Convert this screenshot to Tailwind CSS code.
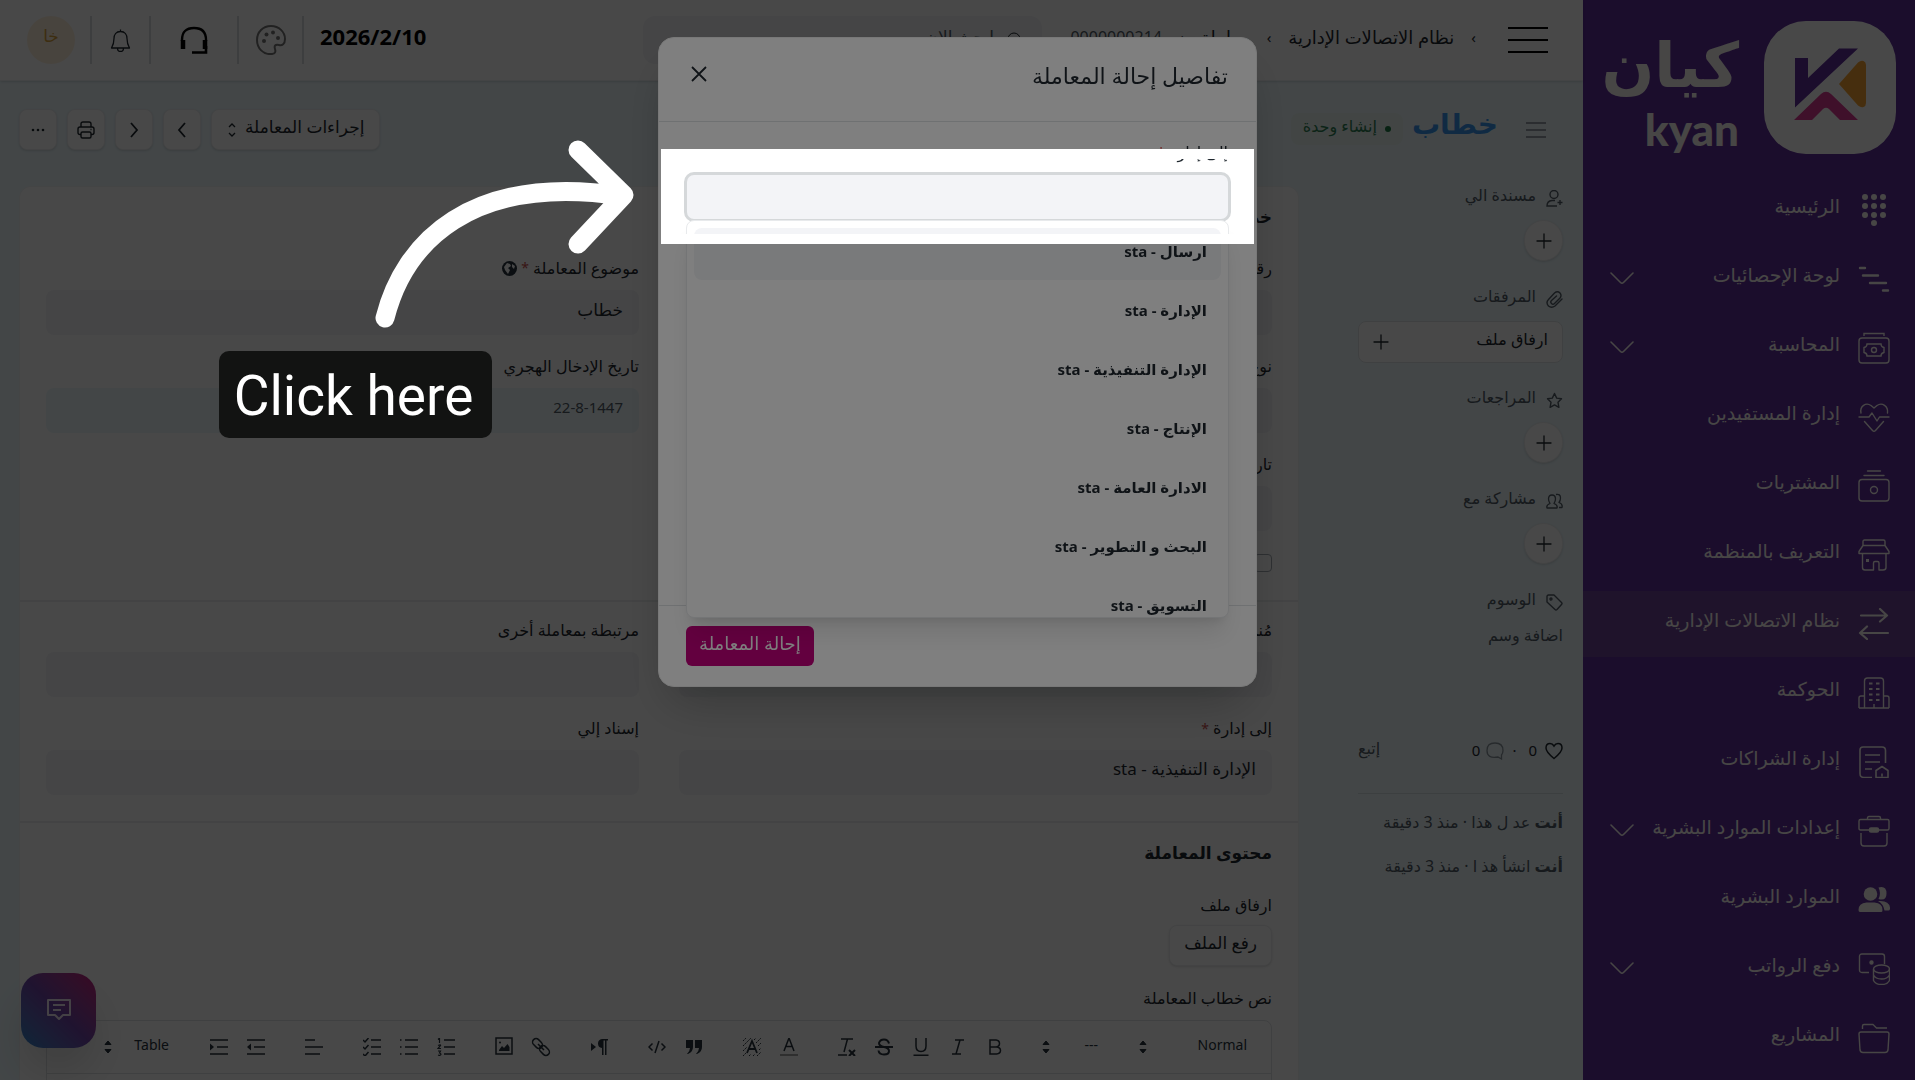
<!DOCTYPE html>
<html lang="ar" dir="rtl">
<head>
  <meta charset="UTF-8">
  <meta name="viewport" content="width=device-width, initial-scale=1.0">
  <title>كيان - خطاب</title>
  <script src="https://cdn.jsdelivr.net/npm/@tailwindcss/browser@4"></script>
</head>
<body class="h-screen overflow-hidden bg-[#ecf8fc] font-['Noto_Sans','DejaVu_Sans',sans-serif] text-[#1f272e]">

  <!-- icons used more than once -->
  <svg class="hidden">
    <symbol id="down" viewBox="0 0 24 14"><path d="M1 1l9.5 9.5q1.5 1.3 3 0L23 1" fill="none" stroke="currentColor" stroke-width="1.6" stroke-linecap="round"/></symbol>
    <symbol id="plus" viewBox="0 0 16 16"><path d="M8 1v14M1 8h14" fill="none" stroke="currentColor" stroke-width="1.3" stroke-linecap="round"/></symbol>
    <symbol id="sort" viewBox="0 0 10 16"><path d="M2 5.500L5 2l3 3.500zM2 10.500L5 14l3-3.500z" fill="currentColor" stroke="currentColor" stroke-linejoin="round"/></symbol>
  </svg>

  <div class="flex h-full">

    <!-- sidebar -->
    <aside class="flex w-[332px] shrink-0 flex-col overflow-hidden bg-[#602e9c] text-[#fbf7f4]">
      <div class="flex h-[177px] shrink-0 items-start pt-[21px] pr-[19px]">
        <svg class="h-[133px] w-[132px] shrink-0" viewBox="0 0 132 133">
          <rect width="132" height="133" rx="42" fill="#fff"/>
          <path d="M31 37h13v20l31-29.500h19L31 86.500z" fill="#602e9c"/>
          <path d="M75 63l19-21.500q3-2.500 5.500-1.500 2.500 1 2.500 4v38q0 3-2.500 4t-5.500-1.500z" fill="#f8a433"/>
          <path d="M30 99l27-26q5-4.500 10 0l27 26H76L65 88q-3-2.500-6 0L48 99z" fill="#dd3a94"/>
        </svg>
        <div class="mr-[25px] flex flex-col items-start font-bold">
          <span class="h-[90px] text-[62px] leading-[84px] whitespace-nowrap">كيان</span>
          <span class="font-[Lato] text-[44px] leading-9 font-black" dir="ltr">kyan</span>
        </div>
      </div>
      <nav class="flex flex-col gap-[3px] text-[19px] whitespace-nowrap">
        <a href="#" class="flex h-[66px] shrink-0 items-center gap-[18px] pr-[25px] pl-[27px]">
          <svg class="size-8 shrink-0" viewBox="0 0 32 32" fill="currentColor"><circle cx="7" cy="3" r="3"/><circle cx="16" cy="3" r="3"/><circle cx="25" cy="3" r="3"/><circle cx="7" cy="12" r="3"/><circle cx="16" cy="12" r="3"/><circle cx="25" cy="12" r="3"/><circle cx="7" cy="21" r="3"/><circle cx="16" cy="21" r="3"/><circle cx="25" cy="21" r="3"/><circle cx="16" cy="29" r="3"/></svg>
          <span class="pb-2">الرئيسية</span>
        </a>
        <a href="#" class="flex h-[66px] shrink-0 items-center gap-[18px] pr-[25px] pl-[27px]">
          <svg class="size-8 shrink-0" viewBox="0 0 32 32" fill="none" stroke="currentColor" stroke-width="2.400" stroke-linecap="round"><path d="M2 5h5M5 12.500h15M12 20h16M25 27.500h5"/></svg>
          <span class="pb-2">لوحة الإحصائيات</span>
          <svg class="mr-auto h-3.5 w-6 shrink-0"><use href="#down"/></svg>
        </a>
        <a href="#" class="flex h-[66px] shrink-0 items-center gap-[18px] pr-[25px] pl-[27px]">
          <svg class="size-8 shrink-0" viewBox="0 0 32 32" fill="none" stroke="currentColor" stroke-width="1.400"><path d="M6 4V1.500h20V4"/><rect x="1" y="6" width="30" height="25" rx="3"/><path d="M9 12h14q0 3 3 3.500v5q-3 .5-3 3.500H9q0-3-3-3.500v-5q3-.5 3-3.500z"/><circle cx="16" cy="18" r="2.500"/></svg>
          <span class="pb-2">المحاسبة</span>
          <svg class="mr-auto h-3.5 w-6 shrink-0"><use href="#down"/></svg>
        </a>
        <a href="#" class="flex h-[66px] shrink-0 items-center gap-[18px] pr-[25px] pl-[27px]">
          <svg class="size-8 shrink-0" viewBox="0 0 32 32" fill="none" stroke="currentColor" stroke-width="1.400" stroke-linecap="round" stroke-linejoin="round"><path d="M3 12C1.500 5 8 1 13 4.500l3 2.500 3-2.500C24 1 30.500 5 29.500 12M1 16h10l3-4 5 8 2.500-4H31M6.500 20.500l8 9q1.500 1.500 3 0l8-9"/></svg>
          <span class="pb-2">إدارة المستفيدين</span>
        </a>
        <a href="#" class="flex h-[66px] shrink-0 items-center gap-[18px] pr-[25px] pl-[27px]">
          <svg class="size-8 shrink-0" viewBox="0 0 32 32" fill="none" stroke="currentColor" stroke-width="1.400" stroke-linecap="round"><path d="M9.500 1h13M6 5.500h20"/><rect x="1" y="9.500" width="30" height="21.500" rx="3"/><circle cx="16" cy="20" r="3.500"/></svg>
          <span class="pb-2">المشتريات</span>
        </a>
        <a href="#" class="flex h-[66px] shrink-0 items-center gap-[18px] pr-[25px] pl-[27px]">
          <svg class="size-8 shrink-0" viewBox="0 0 32 32" fill="none" stroke="currentColor" stroke-width="1.400" stroke-linejoin="round"><path d="M5 6.500V2.500q0-1.500 1.500-1.500h19q1.500 0 1.500 1.500v4zM5 6.500L1 12.500v2h30v-2L27 6.500M4.500 14.500v14q0 2.500 2.500 2.500h8.500v-7q0-1.500 1.500-1.500h2.500q1.500 0 1.500 1.500v7H25q3 0 3-2.500v-14"/><path d="M8 20h3v3H8z" fill="currentColor" stroke="none"/></svg>
          <span class="pb-2">التعريف بالمنظمة</span>
        </a>
        <a href="#" class="flex h-[66px] shrink-0 items-center gap-[18px] bg-[#6e4499] pr-[25px] pl-[27px]">
          <svg class="size-8 shrink-0" viewBox="0 0 32 32" fill="none" stroke="currentColor" stroke-width="2.200" stroke-linecap="round" stroke-linejoin="round"><path d="M3 7.500h26M22 1l7 6.500-7 6M30 25H2M9 18.500L2 25l7 6"/></svg>
          <span class="pb-2">نظام الاتصالات الإدارية</span>
        </a>
        <a href="#" class="flex h-[66px] shrink-0 items-center gap-[18px] pr-[25px] pl-[27px]">
          <svg class="size-8 shrink-0" viewBox="0 0 32 32" fill="none" stroke="currentColor" stroke-width="1.400"><path d="M1 31h30M6.500 31V4q0-3 3-3h13q3 0 3 3v27M6.500 19H3q-2 0-2 2v10M25.500 19H29q2 0 2 2v10M16 27v4"/><path d="M11 6.500h3.500M18 6.500h3.500M11 12h3.500M18 12h3.500M11 17.500h3.500M18 17.500h3.500M11 23h3.500M18 23h3.500" stroke-width="1.800"/></svg>
          <span class="pb-2">الحوكمة</span>
        </a>
        <a href="#" class="flex h-[66px] shrink-0 items-center gap-[18px] pr-[25px] pl-[27px]">
          <svg class="size-8 shrink-0" viewBox="0 0 32 32" fill="none" stroke="currentColor" stroke-width="1.600" stroke-linejoin="round"><path d="M14 31.500H6q-4 0-4-4V4q0-3 3-3h19q3.500 0 3.500 3.500V17M7 9h15M7 16h15M7 23h7M18 31.500v-7l6-4 6 4v7zM24 27.500v3"/></svg>
          <span class="pb-2">إدارة الشراكات</span>
        </a>
        <a href="#" class="flex h-[66px] shrink-0 items-center gap-[18px] pr-[25px] pl-[27px]">
          <svg class="size-8 shrink-0" viewBox="0 0 32 32" fill="none" stroke="currentColor" stroke-width="1.400" stroke-linejoin="round"><path d="M9.500 4.500V3q0-1.500 1.500-1.500h10q1.500 0 1.500 1.500v1.500M11 15H2.500Q1 15 1 13.500V6q0-1.500 1.500-1.500h27Q31 4.500 31 6v7.500q0 1.500-1.500 1.500H21M3 18v10q0 3 3 3h20q3 0 3-3V18"/><rect x="11.500" y="13" width="9" height="4" rx="1.500" fill="currentColor"/></svg>
          <span class="pb-2">إعدادات الموارد البشرية</span>
          <svg class="mr-auto h-3.5 w-6 shrink-0"><use href="#down"/></svg>
        </a>
        <a href="#" class="flex h-[66px] shrink-0 items-center gap-[18px] pr-[25px] pl-[27px]">
          <svg class="size-8 shrink-0" viewBox="0 0 32 32" fill="currentColor"><circle cx="12.500" cy="10" r="6.800"/><path d="M20.500 3.500q8-2 8 6t-8 5.500q3-5.500 0-11.500zM.5 26q0-7 8-7.500h8q8 .5 8 7.500 0 2-1 2H2q-1.500 0-1.500-2zM20 17q11-1 12 6.500v1.500q-.5 1.500-1.500 1.500h-4q-1-6.500-6.500-9.500z"/></svg>
          <span class="pb-2">الموارد البشرية</span>
        </a>
        <a href="#" class="flex h-[66px] shrink-0 items-center gap-[18px] pr-[25px] pl-[27px]">
          <svg class="size-8 shrink-0" viewBox="0 0 32 32" fill="none" stroke="currentColor" stroke-width="1.400"><path d="M11 19.500H4q-2.500 0-2.500-2.500V3.500Q1.500 1 4 1h20q2.500 0 2.500 2.500V11"/><circle cx="13.500" cy="9.500" r="1.500" fill="currentColor"/><ellipse cx="23.500" cy="16" rx="8" ry="4"/><path d="M15.500 16v11.500q2 4 8 4t8-4V16M15.500 22q2 4 8 4t8-4"/></svg>
          <span class="pb-2">دفع الرواتب</span>
          <svg class="mr-auto h-3.5 w-6 shrink-0"><use href="#down"/></svg>
        </a>
        <a href="#" class="flex h-[66px] shrink-0 items-center gap-[18px] pr-[25px] pl-[27px]">
          <svg class="size-8 shrink-0" viewBox="0 0 32 32" fill="none" stroke="currentColor" stroke-width="1.400" stroke-linejoin="round"><path d="M4.500 7V4q0-1.500 1.500-1.500h9l3.500 3.500H29M1 12q0-2 2-2h26q2 0 2 2l-1 16q-.5 2.500-3 2.500H5Q2.500 30.500 2 28z"/></svg>
          <span class="pb-2">المشاريع</span>
        </a>
      </nav>
    </aside>

    <div class="flex min-w-0 flex-1 flex-col">

      <!-- top bar -->
      <header class="flex h-[81px] shrink-0 items-center border-b border-[#eef0f2] bg-white pr-[35px] shadow-sm">
        <button aria-label="القائمة" class="flex w-10 shrink-0 flex-col gap-2.5">
          <span class="h-0.5 w-full bg-black"></span><span class="h-0.5 w-full bg-black"></span><span class="h-0.5 w-full bg-black"></span>
        </button>
        <nav class="mr-[32px] flex w-[400px] shrink-0 items-center gap-[17px] pb-1.5 text-[15px] whitespace-nowrap">
          <span>›</span>
          <a href="#" class="text-lg">نظام الاتصالات الإدارية</a>
          <span>›</span>
          <a href="#" class="text-lg">معاملة</a>
          <span>›</span>
          <span class="text-base text-[#525c66]">0000000214</span>
        </nav>
        <label class="mr-[34px] flex h-12 w-[399px] items-center gap-3 rounded-xl bg-[#f3f4f7] px-5">
          <svg class="size-4 shrink-0" viewBox="0 0 16 16" fill="none" stroke="currentColor"><circle cx="8" cy="7" r="6"/><path d="M12 11l4 4"/></svg>
          <input type="search" placeholder="ابحث الان..." aria-label="ابحث" class="w-full pb-1.5 text-[17px] outline-none placeholder:text-[#525c66]">
        </label>
        <span class="mr-auto pb-2 pl-4 text-[22px] font-bold text-black">2026/2/10</span>
        <button aria-label="المظهر" class="flex h-12 w-[67px] items-center justify-center border-x-2 border-[#d9dbdd]">
          <svg class="size-[30px]" viewBox="0 0 30 30"><path d="M16 29C7 30 1 23 1 15 1 7 7 1 15 1s14 6 14 13c0 5-3 7-6 6-4-1-5 1-4 4s0 4.500-3 5z" fill="none" stroke="#777" stroke-width="2"/><g fill="#777"><circle cx="8" cy="16" r="2"/><circle cx="10.500" cy="9.500" r="2"/><circle cx="17" cy="7.500" r="2"/><circle cx="22" cy="13" r="2"/></g></svg>
        </button>
        <button aria-label="الدعم" class="flex h-12 w-[86px] items-center justify-center">
          <svg class="size-7" viewBox="0 0 28 28" fill="none" stroke="#000"><path d="M2 15v-1Q2 2 14 2t12 12v1" stroke-width="2.400"/><path d="M3 14v9M25 14v9" stroke-width="4.500"/><path d="M26 20v6.500H12" stroke-width="2.600"/></svg>
        </button>
        <button aria-label="الإشعارات" class="flex h-12 w-[61px] items-center justify-center border-x-2 border-[#d9dbdd]">
          <svg class="size-[23px]" viewBox="0 0 23 23" fill="none" stroke="currentColor" stroke-width="1.300" stroke-linejoin="round"><path d="M11.500 2.500C7 2.500 5 6 5 9.500c0 5-.5 6-2.500 9.500h18C18.500 15.500 18 14.500 18 9.500c0-3.500-2-7-6.500-7zM11.500 2.500V.5M8.500 19q0 3.500 3 3.500t3-3.500"/></svg>
        </button>
        <button class="mr-[15px] ml-[27px] size-12 shrink-0 rounded-full bg-[#fff0dc] pb-2 text-[17px] text-[#d9a23c]">خا</button>
      </header>

      <!-- page head -->
      <div class="flex h-[105px] shrink-0 items-start pt-7 pr-[37px] pl-[19px]">
        <button aria-label="اللوحة الجانبية" class="mt-[13px] flex w-5 shrink-0 flex-col gap-[5px]">
          <span class="h-0.5 w-full bg-[#98a1a9]"></span><span class="h-0.5 w-full bg-[#98a1a9]"></span><span class="h-0.5 w-full bg-[#98a1a9]"></span>
        </button>
        <h1 class="mr-7 text-[28px] leading-[28px] font-bold text-[#3b96ee]">خطاب</h1>
        <span class="mt-1 mr-[9px] flex h-8 items-center gap-2 rounded-lg bg-[#e8f5f0] px-3 text-base text-[#2f8055]">
          <i class="size-1.5 rounded-full bg-[#1d7a45]"></i><span class="pb-1.5">إنشاء وحدة</span>
        </span>
        <div class="mr-auto flex gap-2.5">
          <button class="flex h-[41px] items-center gap-2 rounded-lg border border-[#eceeef] bg-white px-[15px] text-[17px] shadow-sm">
            <span class="pb-1.5">إجراءات المعاملة</span>
            <svg class="h-4 w-2.5" viewBox="0 0 10 16" fill="none" stroke="currentColor" stroke-width="1.300"><path d="M2 5l3-3 3 3M2 11l3 3 3-3"/></svg>
          </button>
          <button aria-label="السابق" class="flex h-[41px] w-[38px] items-center justify-center rounded-lg border border-[#eceeef] bg-white shadow-sm"><svg class="size-4" viewBox="0 0 16 16" fill="none" stroke="currentColor" stroke-width="1.800"><path d="M11 1L5 8l6 7"/></svg></button>
          <button aria-label="التالي" class="flex h-[41px] w-[38px] items-center justify-center rounded-lg border border-[#eceeef] bg-white shadow-sm"><svg class="size-4" viewBox="0 0 16 16" fill="none" stroke="currentColor" stroke-width="1.800"><path d="M5 1l6 7-6 7"/></svg></button>
          <button aria-label="طباعة" class="flex h-[41px] w-[38px] items-center justify-center rounded-lg border border-[#eceeef] bg-white shadow-sm"><svg class="size-[18px]" viewBox="0 0 18 18" fill="none" stroke="currentColor" stroke-width="1.400" stroke-linejoin="round"><path d="M4 6V3q0-2 2-2h6q2 0 2 2v3M4 13.500H3q-2 0-2-2V8q0-2 2-2h12q2 0 2 2v3.500q0 2-2 2h-1"/><rect x="4" y="11" width="10" height="6" rx="1.500"/><path d="M13.500 8.500h1"/></svg></button>
          <button aria-label="المزيد" class="flex h-[41px] w-[38px] items-center justify-center rounded-lg border border-[#eceeef] bg-white shadow-sm"><svg class="h-1 w-3.5" viewBox="0 0 14 4" fill="currentColor"><circle cx="2" cy="2" r="1.300"/><circle cx="7" cy="2" r="1.300"/><circle cx="12" cy="2" r="1.300"/></svg></button>
        </div>
      </div>

      <div class="flex min-h-0 flex-1">

        <!-- document side panel -->
        <section class="w-[284px] shrink-0 pr-5 pl-[59px] text-base text-[#525c66]">
          <div class="h-[101px]">
            <div class="flex h-[34px] items-start gap-2.5 leading-[18px]"><svg class="mt-1 size-[17px]" viewBox="0 0 17 17" fill="none" stroke="currentColor" stroke-width="1.400"><circle cx="8" cy="4.500" r="4"/><path d="M11 16H1q0-5 5-5.500h3M11.500 12.500h5M14 10v5"/></svg>مسندة الي</div>
            <button aria-label="إسناد" class="flex h-[41px] w-[39px] items-center justify-center rounded-full border border-[#eceeef] bg-white text-[#1f272e] shadow-sm"><svg class="size-4"><use href="#plus"/></svg></button>
          </div>
          <div class="h-[101px]">
            <div class="flex h-[34px] items-start gap-2.5 leading-[18px]"><svg class="mt-1 size-[17px]" viewBox="0 0 17 17" fill="none" stroke="currentColor" stroke-width="1.400" stroke-linecap="round"><path d="M16 8l-7 7q-3.500 2.500-6.500 0-3-3.500 0-6.500l6-6.500q3-2.500 5.500 0 2 2.500 0 5L8.500 12.500q-1.500 1.500-3 0t0-3L10.500 5"/></svg>المرفقات</div>
            <button class="flex h-[42px] w-full items-center justify-between rounded-lg border border-[#dfe2e5] bg-white px-[14px] text-base text-[#1f272e]"><span class="pb-1.5">ارفاق ملف</span><svg class="size-4"><use href="#plus"/></svg></button>
          </div>
          <div class="h-[101px]">
            <div class="flex h-[34px] items-start gap-2.5 leading-[18px]"><svg class="mt-1 size-[17px]" viewBox="0 0 17 17" fill="none" stroke="currentColor" stroke-width="1.400" stroke-linejoin="round"><path d="M8.500 1.500l2.200 4.600 4.800.7-3.500 3.500.9 5-4.400-2.400-4.400 2.400.9-5L1.500 6.800l4.800-.7z"/></svg>المراجعات</div>
            <button aria-label="مراجعة" class="flex h-[41px] w-[39px] items-center justify-center rounded-full border border-[#eceeef] bg-white text-[#1f272e] shadow-sm"><svg class="size-4"><use href="#plus"/></svg></button>
          </div>
          <div class="h-[101px]">
            <div class="flex h-[34px] items-start gap-2.5 leading-[18px]"><svg class="mt-1 size-[17px]" viewBox="0 0 17 17" fill="none" stroke="currentColor" stroke-width="1.300" stroke-linejoin="round"><path d="M1 15q-1-3 3-4.500Q2.500 8 2.500 6q0-4 3.500-4t3.500 4q0 2-1.500 4.500 4 1.500 3 4.500zM10 1.500q4.500-1 4.500 3.500 0 2.500-1.500 4.500 4 1.500 3 5h-3"/></svg>مشاركة مع</div>
            <button aria-label="مشاركة" class="flex h-[41px] w-[39px] items-center justify-center rounded-full border border-[#eceeef] bg-white text-[#1f272e] shadow-sm"><svg class="size-4"><use href="#plus"/></svg></button>
          </div>
          <div class="h-[148px]">
            <div class="flex h-[36px] items-start gap-2.5 leading-[18px]"><svg class="mt-1 size-[17px]" viewBox="0 0 17 17" fill="none" stroke="currentColor" stroke-width="1.400" stroke-linejoin="round"><path d="M1 2.500Q1 1 2.500 1H8l7.500 7.500q1 1 0 2l-4.500 5q-1 1-2 0L1 8z"/><circle cx="5" cy="5" r="1"/></svg>الوسوم</div>
            <a href="#" class="block leading-[18px]">اضافة وسم</a>
          </div>
          <div class="flex h-[56px] items-start border-b border-[#d5dde1] text-[15px] leading-6 text-[#1f272e]">
            <svg class="mt-1 size-[18px]" viewBox="0 0 18 18" fill="none" stroke="currentColor" stroke-width="1.500"><path d="M9 16.500Q1 10 1 6q0-4.500 4-4.500 2.500 0 4 2.500 1.500-2.500 4-2.500 4 0 4 4.500 0 4-8 10.500z"/></svg>
            <span class="mx-2">0</span><span class="mx-1">·</span>
            <svg class="mt-1 mr-1 size-[18px] text-[#8b959d]" viewBox="0 0 18 18" fill="none" stroke="currentColor" stroke-width="1.300"><path d="M12 15Q1 17 1 8.500 1 1 9 1t8 7.500q0 2.500-1.500 4.500V17z"/></svg>
            <span class="mx-1.5">0</span>
            <a href="#" class="mr-auto text-base leading-5 text-[#525c66]">إتبع</a>
          </div>
          <p class="mt-[18px] leading-5 whitespace-nowrap"><b>أنت</b> عد ل هذا · منذ 3 دقيقة</p>
          <p class="mt-6 leading-5 whitespace-nowrap"><b>أنت</b> انشأ هذ ا · منذ 3 دقيقة</p>
        </section>

        <!-- form -->
        <main class="ml-[19px] min-w-0 flex-1 overflow-hidden rounded-t-xl border border-b-0 border-[#f1f3f4] bg-white text-base">
          <section class="border-b-2 border-[#eceef0] px-[26px] pt-[18px] pb-7">
            <h2 class="mb-[27px] text-[17px] leading-6 font-bold">خطاب جديد</h2>
            <div class="grid grid-cols-2 gap-10">
              <div>
                <label for="num" class="mb-2.5 block leading-6">رقم المعاملة</label>
                <input id="num" class="mb-[19px] block h-[45px] w-full rounded-lg bg-[#f3f4f7] px-4 outline-none">
                <label for="type" class="mb-2.5 block leading-6">نوع المعاملة</label>
                <input id="type" class="mb-[19px] block h-[45px] w-full rounded-lg bg-[#f3f4f7] px-4 outline-none">
                <label for="date" class="mb-2.5 block leading-6">تاريخ الإدخال</label>
                <input id="date" class="mb-[23px] block h-[45px] w-full rounded-lg bg-[#f3f4f7] px-4 outline-none">
                <input type="checkbox" aria-label="سري" class="block size-[18px] appearance-none rounded border border-[#a3aab2]">
              </div>
              <div>
                <label for="subject" class="mb-2.5 flex items-center gap-1 leading-6">موضوع المعاملة <span class="text-sm text-[#c9504d]">*</span>
                  <svg class="size-[15px]" viewBox="0 0 15 15"><circle cx="7.500" cy="7.500" r="7.500" fill="#27333d"/><path d="M5 2l3 1 1 2-3 2 2 2-2 4-3-4-1-3zM10 3l3 2-1 3-2-2z" fill="#fff"/></svg>
                </label>
                <input id="subject" value="خطاب" class="mb-[19px] block h-[45px] w-full rounded-lg bg-[#f3f4f7] px-4 pb-1.5 text-[17px] outline-none">
                <label for="hijri" class="mb-2.5 block leading-6">تاريخ الإدخال الهجري</label>
                <input id="hijri" value="22-8-1447" readonly dir="ltr" class="block h-[45px] w-full rounded-lg bg-[#ecf8fc] px-4 pb-2 text-right text-[15px] text-[#525c66] outline-none">
              </div>
            </div>
          </section>
          <section class="border-b-2 border-[#eceef0] px-[26px] pt-4 pb-[26px]">
            <div class="grid grid-cols-2 gap-x-10 gap-y-[19px]">
              <div>
                <label for="creator" class="mb-2.5 block leading-6">مُنشئ المعاملة</label>
                <input id="creator" class="block h-[45px] w-full rounded-lg bg-[#f3f4f7] px-4 outline-none">
              </div>
              <div>
                <label for="linked" class="mb-2.5 block leading-6">مرتبطة بمعاملة أخرى</label>
                <input id="linked" class="block h-[45px] w-full rounded-lg bg-[#f3f4f7] px-4 outline-none">
              </div>
              <div>
                <label for="dept" class="mb-2.5 block leading-6">إلى إدارة <span class="text-sm text-[#c9504d]">*</span></label>
                <input id="dept" value="الإدارة التنفيذية - sta" class="block h-[45px] w-full rounded-lg bg-[#f3f4f7] px-4 pb-2 text-[17px] outline-none">
              </div>
              <div>
                <label for="assign" class="mb-2.5 block leading-6">إسناد إلي</label>
                <input id="assign" class="block h-[45px] w-full rounded-lg bg-[#f3f4f7] px-4 outline-none">
              </div>
            </div>
          </section>
          <section class="px-[26px] pt-[18px]">
            <h2 class="mb-7 text-[17px] leading-6 font-bold">محتوى المعاملة</h2>
            <p class="mb-2 leading-6">ارفاق ملف</p>
            <button class="mb-5 block h-[41px] rounded-lg border border-[#eceeef] bg-white px-[14px] pb-1.5 text-[17px] shadow-sm">رفع الملف</button>
            <p class="mb-2.5 leading-6">نص خطاب المعاملة</p>
            <div class="rounded-t-lg border border-[#dfe2e5]">
              <div class="flex h-[53px] items-center gap-[21px] border-b border-[#dfe2e5] pr-[14px] text-sm text-[#27333d]">
                <button class="flex w-[119px] shrink-0 items-center justify-between pr-2.5"><span class="pb-1">Normal</span><svg class="h-4 w-2.5"><use href="#sort"/></svg></button>
                <button class="-mr-1 flex w-[87px] shrink-0 items-center justify-between pr-[23px] pl-[7px]"><span class="pb-1">---</span><svg class="h-4 w-2.5"><use href="#sort"/></svg></button>
                <div class="flex">
                  <button aria-label="غامق" class="flex w-[37px] justify-center"><svg class="size-[18px]" viewBox="0 0 18 18" fill="none" stroke="currentColor" stroke-width="1.500"><path d="M4 2h6q3.500.5 3.500 3.500T10 9H4zM4 9h6.500q4 .5 4 3.500t-4 3.500H4z"/></svg></button>
                  <button aria-label="مائل" class="flex w-[37px] justify-center"><svg class="size-[18px]" viewBox="0 0 18 18" fill="none" stroke="currentColor" stroke-width="1.500"><path d="M6 2h9M3 16h9M11 2L7 16"/></svg></button>
                  <button aria-label="تسطير" class="flex w-[37px] justify-center"><svg class="size-[18px]" viewBox="0 0 18 18" fill="none" stroke="currentColor" stroke-width="1.500"><path d="M4 0v8q0 5.500 5 5.500T14 8V0M1.500 17.200h15"/></svg></button>
                  <button aria-label="يتوسطه خط" class="flex w-[37px] justify-center"><svg class="size-[18px]" viewBox="0 0 18 18" fill="none" stroke="currentColor" stroke-width="2"><path d="M14 5.500Q13 1.500 9 1.500T4 5q0 3 5 4t5 4q0 3.500-5 3.500T3.500 12.500M0 9h18"/></svg></button>
                  <button aria-label="إزالة التنسيق" class="flex w-[37px] justify-center"><svg class="size-[18px]" viewBox="0 0 18 18" fill="none" stroke="currentColor" stroke-width="1.500"><path d="M3 1h12M9.500 1L6 14M0 17h9"/><path d="M11 12l6 6M17 12l-6 6" stroke-width="2"/></svg></button>
                </div>
                <div class="flex">
                  <button aria-label="لون الخط" class="flex w-[37px] justify-center"><svg class="size-[18px]" viewBox="0 0 18 18" fill="none" stroke="currentColor" stroke-width="1.500"><path d="M4 13L9 0l5 13M6 8.500h6"/><path d="M0 17h18" stroke="#888"/></svg></button>
                  <button aria-label="لون الخلفية" class="flex w-[37px] justify-center"><svg class="size-[18px]" viewBox="0 0 18 18" fill="none" stroke="currentColor"><path d="M4 15L9 3l5 12M6 11h6" stroke-width="1.800"/><path d="M0 3l3-3M0 8l8-8M0 13l4-4M11 2l2-2M13 5l5-5M15 8l3-3M0 18l3-3M6 18l2-2M10 18l2-2M14 18l4-4M16 12l2-2" stroke-dasharray="2 1"/></svg></button>
                </div>
                <div class="flex">
                  <button aria-label="اقتباس" class="flex w-[37px] justify-center"><svg class="size-[18px]" viewBox="0 0 18 18" fill="currentColor"><path d="M1 2h7v7q0 5-5 7H2q3-3 3-6H1zM10 2h7v7q0 5-5 7h-1q3-3 3-6h-4z"/></svg></button>
                  <button aria-label="كود" class="flex w-[37px] justify-center"><svg class="size-[18px]" viewBox="0 0 18 18" fill="none" stroke="currentColor" stroke-width="1.500"><path d="M4.500 5.500L1 9l3.500 3.500M13.500 5.500L17 9l-3.500 3.500M11 3L7 15"/></svg></button>
                </div>
                <button aria-label="اتجاه النص" class="flex w-[37px] justify-center"><svg class="size-[18px]" viewBox="0 0 18 18" fill="currentColor"><path d="M1 5l5 4-5 4zM12 10q-4-.5-4-4.500T12 1h6v1.500h-1.500V17H15V2.500h-1.500V17H12z"/></svg></button>
                <div class="flex">
                  <button aria-label="رابط" class="flex w-[37px] justify-center"><svg class="size-5" viewBox="0 0 20 20" fill="none" stroke="currentColor" stroke-width="1.500"><rect x="1" y="3" width="11" height="7" rx="3.500" transform="rotate(45 6.500 6.500)"/><rect x="8" y="10" width="11" height="7" rx="3.500" transform="rotate(45 13.500 13.500)"/><path d="M7 7l6 6"/></svg></button>
                  <button aria-label="صورة" class="flex w-[37px] justify-center"><svg class="size-[18px]" viewBox="0 0 18 18" fill="none" stroke="currentColor" stroke-width="1.500"><path d="M1 1h16v16H1z"/><path d="M4 13l3-4 2 2 3.500-4 2 3v4H4z" fill="currentColor" stroke="none"/><circle cx="5" cy="5.500" r="1" fill="currentColor" stroke="none"/></svg></button>
                </div>
                <div class="flex">
                  <button aria-label="قائمة مرقمة" class="flex w-[37px] justify-center"><svg class="size-[18px]" viewBox="0 0 18 18" fill="none" stroke="currentColor" stroke-width="1.500"><path d="M7 2h11M7 9h11M7 16h11"/><path d="M1 1.500L2.500 0v5M1 7.500q3-1.500 2.500 0L1 10.500h3M1 13h2.500L2.500 15q3 1 0 2.500L1 17" stroke-width="1.200"/></svg></button>
                  <button aria-label="قائمة نقطية" class="flex w-[37px] justify-center"><svg class="size-[18px]" viewBox="0 0 18 18" fill="none" stroke="currentColor" stroke-width="1.500"><path d="M5 2h13M5 9h13M5 16h13M0 2h1.500M0 9h1.500M0 16h1.500"/></svg></button>
                  <button aria-label="قائمة مهام" class="flex w-[37px] justify-center"><svg class="size-[18px]" viewBox="0 0 18 18" fill="none" stroke="currentColor" stroke-width="1.500"><path d="M8 2h10M8 9h10M8 16h10M0 2l2 2 3.500-4M0 9l2 2 3.500-4M0 16l2 2 3.500-4"/></svg></button>
                </div>
                <button aria-label="محاذاة" class="flex w-[37px] justify-center"><svg class="size-[18px]" viewBox="0 0 18 18" fill="none" stroke="currentColor" stroke-width="1.500"><path d="M0 2h10M0 9h18M0 16h15"/></svg></button>
                <div class="flex">
                  <button aria-label="إنقاص المسافة" class="flex w-[37px] justify-center"><svg class="size-[18px]" viewBox="0 0 18 18" fill="none" stroke="currentColor" stroke-width="1.500"><path d="M0 2h18M7 9h11M0 16h18"/><path d="M4 5.500v7L0 9z" fill="currentColor" stroke="none"/></svg></button>
                  <button aria-label="زيادة المسافة" class="flex w-[37px] justify-center"><svg class="size-[18px]" viewBox="0 0 18 18" fill="none" stroke="currentColor" stroke-width="1.500"><path d="M0 2h18M7 9h11M0 16h18"/><path d="M0 5.500v7L4 9z" fill="currentColor" stroke="none"/></svg></button>
                </div>
                <button class="flex w-[76px] shrink-0 items-center justify-between pr-2.5"><span class="pb-1">Table</span><svg class="h-4 w-2.5"><use href="#sort"/></svg></button>
              </div>
              <div class="h-40"></div>
            </div>
          </section>
        </main>
      </div>
    </div>
  </div>

  <button aria-label="المحادثة" class="fixed bottom-8 left-[21px] flex h-[75px] w-[75px] items-center justify-center rounded-[22px] bg-linear-to-tr from-[#1e86c8] via-[#7044a8] to-[#c8127c] pb-1 text-[#f0e4f4] shadow-2xl">
    <svg class="size-[26px]" viewBox="0 0 26 26" fill="none" stroke="currentColor" stroke-width="2" stroke-linejoin="round"><path d="M2 4h22v15h-7l-4 4-4-4H2z"/><path d="M7 9h12M7 14h8"/></svg>
  </button>

  <!-- dialog with the highlighted step -->
  <div class="fixed inset-0 flex items-start justify-center overflow-hidden bg-black/43 pt-[37px]">
    <div role="dialog" aria-label="تفاصيل إحالة المعاملة" class="relative flex h-[650px] w-[599px] flex-col rounded-2xl border border-[#f0f0f0] bg-white shadow-2xl">
      <div class="flex h-[84px] shrink-0 items-center justify-between border-b border-[#dfe2e5] px-7">
        <h2 class="pb-2 text-[22px]">تفاصيل إحالة المعاملة</h2>
        <button aria-label="إغلاق" class="pb-3 pl-1"><svg class="size-4" viewBox="0 0 16 16" fill="none" stroke="currentColor" stroke-width="1.800"><path d="M1 1l14 14M15 1L1 15"/></svg></button>
      </div>
      <div class="flex-1 px-[25px] pt-5">
        <label for="to" class="block h-[30px] px-[3px] text-base leading-5">إلى إدارة <span class="text-sm text-[#e24c4c]">*</span></label>
        <input id="to" class="block h-[50px] w-full rounded-[10px] border-3 border-[#d5d8da] bg-[#f3f4f7] px-4 outline-none">
        <ul class="absolute inset-x-[27px] top-[182px] flex h-[398px] flex-col gap-[7px] overflow-hidden rounded-lg border border-[#e8eaec] bg-white p-[7px] text-[15px] font-bold shadow-xl">
          <li class="flex h-[52px] shrink-0 items-center rounded-lg bg-[#f3f4f7] px-[14px] pb-1.5">ارسال - sta</li>
          <li class="flex h-[52px] shrink-0 items-center px-[14px] pb-1.5">الإدارة - sta</li>
          <li class="flex h-[52px] shrink-0 items-center px-[14px] pb-1.5">الإدارة التنفيذية - sta</li>
          <li class="flex h-[52px] shrink-0 items-center px-[14px] pb-1.5">الإنتاج - sta</li>
          <li class="flex h-[52px] shrink-0 items-center px-[14px] pb-1.5">الادارة العامة - sta</li>
          <li class="flex h-[52px] shrink-0 items-center px-[14px] pb-1.5">البحث و التطوير - sta</li>
          <li class="flex h-[52px] shrink-0 items-center px-[14px] pb-1.5">التسويق - sta</li>
        </ul>
      </div>
      <div class="flex h-[81px] shrink-0 items-start justify-end border-t border-[#dfe2e5] px-[27px] pt-5">
        <button class="h-10 rounded-md bg-[#c7007f] px-[13px] pb-1.5 text-lg text-white">إحالة المعاملة</button>
      </div>

      <!-- spotlight: its shadow dims everything around it -->
      <div class="pointer-events-none absolute inset-x-[2px] top-[111px] h-[95px] border-y-10 border-white shadow-[0_0_0_2000px_rgb(0_0_0/0.5)]"></div>

      <svg class="absolute -left-[289px] top-[93px] h-[200px] w-[280px]" viewBox="0 0 280 200" fill="none" stroke="#fff" stroke-width="19" stroke-linecap="round" stroke-linejoin="round"><path d="M15 187C34 112 100 42 252 65M208 19l46 45-46 49"/></svg>
      <div dir="ltr" class="absolute -left-[440px] top-[313px] flex h-[87px] w-[273px] items-center justify-center rounded-[10px] bg-[#121312] pt-1 pr-1 font-[Roboto] text-[55px] text-white">Click here</div>
    </div>
  </div>

</body>
</html>
